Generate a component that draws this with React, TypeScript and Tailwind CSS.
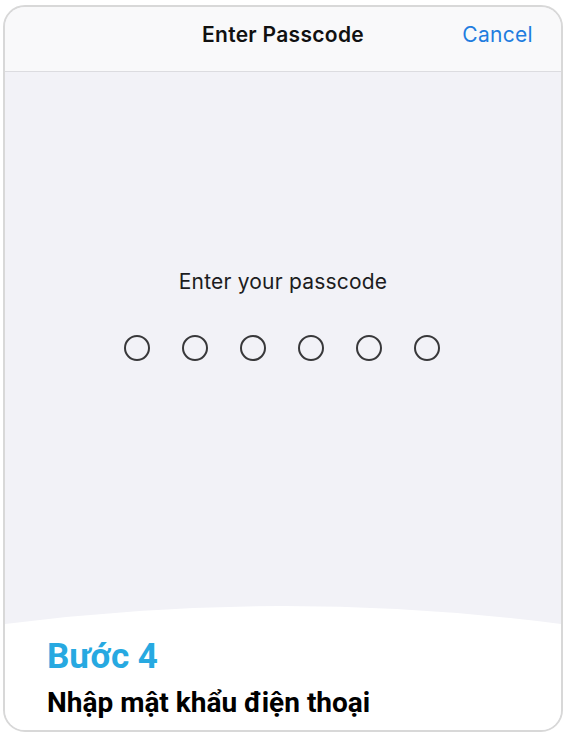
import React from "react";

export default function App() {
  const dots = [0, 1, 2, 3, 4, 5];
  return (
    <div className="w-[566px] h-[740px] bg-white pt-[5px] px-[3px]" style={{ fontFamily: "Inter, 'Noto Sans', sans-serif" }}>
      <div className="h-[727px] flex flex-col overflow-hidden rounded-[22px] border-2 border-[#d8d8d8] bg-[#f2f2f7]">
        <div className="relative h-[65px] shrink-0 bg-[#f9f9fa] border-b border-[#dcdce0] pt-[14px]">
          <div className="text-center text-[21px] leading-[28px] font-semibold text-[#111] tracking-[0.3px]">Enter Passcode</div>
          <div className="absolute right-[28px] top-[14px] text-[21px] leading-[28px] text-[#1f7ddf] tracking-[0.3px]">Cancel</div>
        </div>
        <div className="flex-1 flex flex-col items-center pt-[198px]">
          <div className="text-[21px] leading-[24px] text-[#1c1c1e] tracking-[0.2px]">Enter your passcode</div>
          <div className="mt-[41px] flex gap-[32px] ml-[-3px]">
            {dots.map((d) => (
              <div key={d} className="w-[26px] h-[26px] rounded-full border-2 border-[#38383a]" />
            ))}
          </div>
        </div>
        <div className="shrink-0 bg-white">
          <svg width="556" height="20" viewBox="0 0 556 20" preserveAspectRatio="none" className="block bg-[#f2f2f7]">
            <path d="M0,19 Q278,-17 556,19 L556,20 L0,20 Z" fill="#ffffff" />
          </svg>
          <div className="pt-[12px] pl-[42px] pb-[11px]" style={{ fontFamily: "Roboto, 'Noto Sans', sans-serif" }}>
            <div className="text-[35px] leading-[40px] font-bold text-[#27a9e1]">Bước 4</div>
            <div className="mt-[10px] text-[28px] leading-[32px] font-bold text-black">Nhập mật khẩu điện thoại</div>
          </div>
        </div>
      </div>
    </div>
  );
}
